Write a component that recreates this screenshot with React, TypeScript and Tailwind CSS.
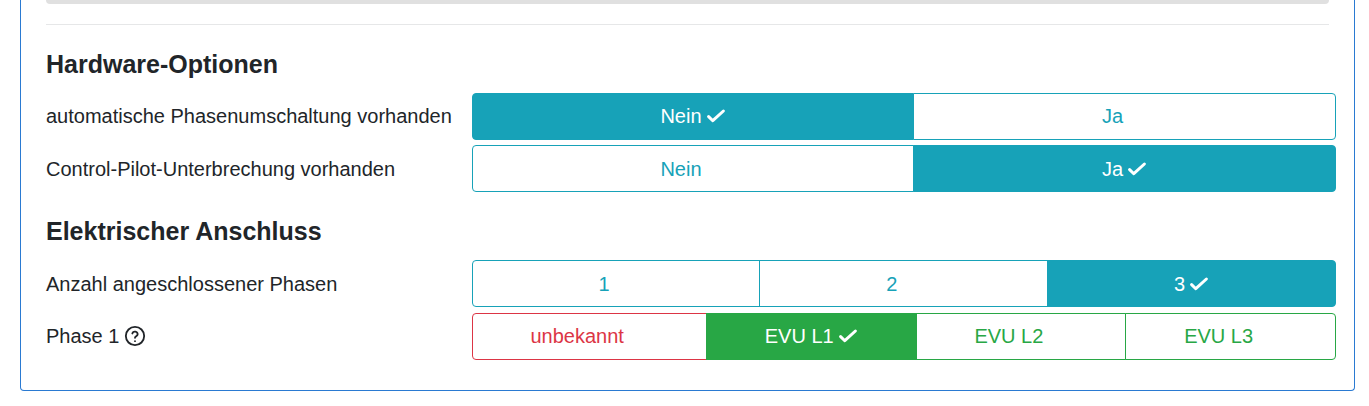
import React from 'react';

type Tone = 'info' | 'success' | 'danger';

type Option = { label: string; tone?: Tone; active?: boolean };

const activeTone: Record<Tone, string> = {
  info: 'bg-[#17a2b8] border-[#17a2b8] text-white',
  success: 'bg-[#28a745] border-[#28a745] text-white',
  danger: 'bg-[#dc3545] border-[#dc3545] text-white',
};

const idleTone: Record<Tone, string> = {
  info: 'bg-white border-[#17a2b8] text-[#17a2b8]',
  success: 'bg-white border-[#28a745] text-[#28a745]',
  danger: 'bg-white border-[#dc3545] text-[#dc3545]',
};

// kept in the layout when hidden, so the labels sit off-centre like the original
function Check({ visible }: { visible?: boolean }) {
  return (
    <svg
      viewBox="0 0 20 20"
      className={`ml-[4px] h-[20px] w-[20px] ${visible ? '' : 'invisible'}`}
      fill="none"
      stroke="currentColor"
      strokeWidth="3"
      strokeLinecap="round"
      strokeLinejoin="round"
    >
      <path d="M2.6 10.6 L6.8 14.7 L17.4 5" />
    </svg>
  );
}

function Buttons({ options }: { options: Option[] }) {
  return (
    <div className="flex h-[47px] w-[864.4px]">
      {options.map((o, i) => {
        const tone = o.tone ?? 'info';
        const first = i === 0;
        const last = i === options.length - 1;
        return (
          <button
            key={o.label}
            className={`flex flex-auto items-center justify-center border text-[20px] ${first ? 'rounded-l-[4px]' : '-ml-px'} ${last ? 'rounded-r-[4px]' : ''} ${o.active ? activeTone[tone] : idleTone[tone]}`}
          >
            {o.label}
            <Check visible={o.active} />
          </button>
        );
      })}
    </div>
  );
}

function Row({ label, children, className = '' }: { label: React.ReactNode; children: React.ReactNode; className?: string }) {
  return (
    <div className={`flex items-center ${className}`}>
      <div className="flex w-[425.6px] items-center text-[20px]">{label}</div>
      {children}
    </div>
  );
}

export default function App() {
  return (
    <div className="h-[406px] overflow-hidden bg-white pl-[20px] text-[#212529] [font-family:'Liberation_Sans',Arial,sans-serif]">
      <div className="h-[391px] w-[1335px] rounded-b-[4px] border-x border-b border-[#2a7ad2] pl-[25px]">
        <div className="h-[4px] w-[1283px] rounded-b-[4px] bg-[#e0e0e0]" />
        <hr className="mt-[20px] w-[1283px] border-t border-[#e6e7e8]" />

        <h3 className="mt-[25px] h-[29px] text-[25px] leading-[29px] font-bold">Hardware-Optionen</h3>
        <Row label="automatische Phasenumschaltung vorhanden" className="mt-[13.6px]">
          <Buttons options={[{ label: 'Nein', active: true }, { label: 'Ja' }]} />
        </Row>
        <Row label="Control-Pilot-Unterbrechung vorhanden" className="mt-[5.8px]">
          <Buttons options={[{ label: 'Nein' }, { label: 'Ja', active: true }]} />
        </Row>

        <h3 className="mt-[24.6px] h-[29px] text-[25px] leading-[29px] font-bold">Elektrischer Anschluss</h3>
        <Row label="Anzahl angeschlossener Phasen" className="mt-[14.4px]">
          <Buttons options={[{ label: '1' }, { label: '2' }, { label: '3', active: true }]} />
        </Row>
        <Row
          className="mt-[5.2px]"
          label={
            <>
              Phase 1
              <svg viewBox="0 0 24 24" className="ml-[5px] h-[22px] w-[22px]" fill="none" stroke="currentColor" strokeWidth="2" strokeLinecap="round">
                <circle cx="12" cy="12" r="10" />
                <path d="M9.1 9.2a3 3 0 0 1 5.8 1c0 2-2.9 2.3-2.9 3.8" />
                <path d="M12 17.6h.01" />
              </svg>
            </>
          }
        >
          <Buttons
            options={[
              { label: 'unbekannt', tone: 'danger' },
              { label: 'EVU L1', tone: 'success', active: true },
              { label: 'EVU L2', tone: 'success' },
              { label: 'EVU L3', tone: 'success' },
            ]}
          />
        </Row>
      </div>
    </div>
  );
}
